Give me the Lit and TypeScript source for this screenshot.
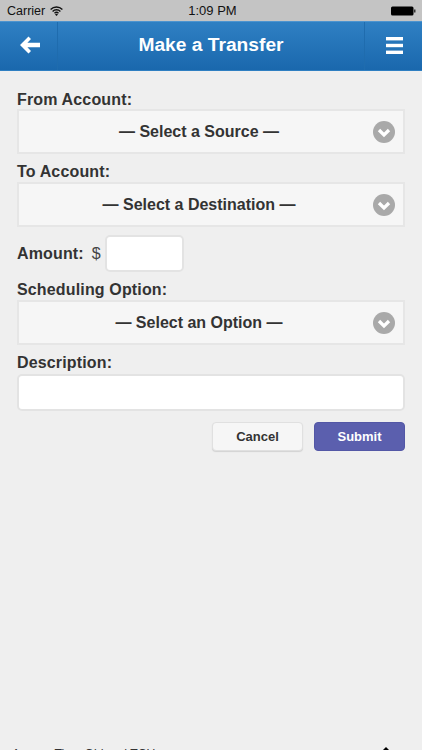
import { LitElement, html, css } from "lit";
import { customElement } from "lit/decorators.js";

@customElement("app-root")
export class AppRoot extends LitElement {
  static styles = css`
    :host {
      display: flex;
      flex-direction: column;
      height: 750px;
      overflow: hidden;
      background: #efefef;
      color: #333;
      font-family: "Liberation Sans", Arial, sans-serif;
    }
    .status {
      height: 21px;
      flex: none;
      background: #c4c4c4;
      color: #111;
      display: grid;
      grid-template-columns: 1fr auto 1fr;
      align-items: center;
      padding: 0 6px 0 7px;
      font-size: 12.5px;
    }
    .status .left { display: flex; align-items: center; gap: 5px; }
    .status .right { display: flex; justify-content: flex-end; }
    .status .time { font-size: 13px; padding-left: 2px; }
    .header {
      height: 50px;
      flex: none;
      box-sizing: border-box;
      display: flex;
      align-items: stretch;
      background: linear-gradient(#2f80c3, #1a68ad);
      border-top: 1px solid #4d94cf;
      border-bottom: 1px solid #2f7fc2;
      color: #fff;
    }
    .hbtn {
      width: 58px;
      flex: none;
      box-sizing: border-box;
      display: flex;
      align-items: center;
      justify-content: center;
    }
    .hbtn.back { border-right: 1px solid #1f6cae; padding: 0 0 3px 1px; }
    .hbtn.menu { border-left: 1px solid #1f6cae; padding: 0 0 1px 1px; }
    .title {
      flex: 1;
      text-align: center;
      font-size: 19.2px;
      font-weight: 700;
      line-height: 45px;
    }
    .form {
      flex: 1;
      padding: 19px 17px 0 17px;
      display: flex;
      flex-direction: column;
    }
    .lbl {
      font-size: 16px;
      letter-spacing: 0.15px;
      font-weight: 700;
      line-height: 19px;
      color: #333;
    }
    .select {
      margin-top: 1px;
      margin-bottom: 8px;
      height: 45px;
      flex: none;
      box-sizing: border-box;
      border: 2px solid #e6e6e6;
      background: #f6f6f6;
      display: flex;
      align-items: center;
      justify-content: center;
      padding: 1px 24px 0 0;
      position: relative;
      font-size: 16px;
      font-weight: 700;
      color: #333;
    }
    .select.first { margin-top: 0; }
    .chev {
      position: absolute;
      right: 8px;
      top: 10px;
      width: 22px;
      height: 22px;
    }
    .amount {
      margin-bottom: 8px;
      display: flex;
      align-items: center;
      height: 37px;
    }
    .dollar { font-size: 16px; color: #444; margin-left: 8px; width: 13px; }
    .input {
      box-sizing: border-box;
      background: #fff;
      border: 2px solid #e3e3e3;
      border-radius: 5px;
    }
    .amount .input { width: 79px; height: 37px; }
    .desc { margin-top: 2px; height: 37px; flex: none; }
    .actions {
      margin-top: 11px;
      display: flex;
      justify-content: flex-end;
      gap: 11px;
    }
    .btn {
      box-sizing: border-box;
      width: 91px;
      height: 29px;
      border-radius: 4px;
      display: flex;
      align-items: center;
      justify-content: center;
      font-size: 13px;
      font-weight: 700;
    }
    .cancel { background: #f6f6f6; border: 1px solid #e0e0e0; box-shadow: 0 1px 1px #d2d2d2; color: #333; }
    .submit { background: #5b5fae; border: 1px solid #5357a6; color: #fff; }
    .footer {
      flex: none;
      height: 3px;
      overflow: hidden;
      position: relative;
      font-size: 12.2px;
      line-height: 14px;
      color: #333;
      padding-left: 12px;
    }
    .footer svg { position: absolute; right: 30px; top: 0; width: 12px; height: 12px; }
  `;

  private chev() {
    return html`<svg class="chev" viewBox="0 0 22 22">
      <circle cx="11" cy="11" r="11" fill="#a9a9a9"></circle>
      <path d="M6 9 11 14l5-5" fill="none" stroke="#fff" stroke-width="3.3"></path>
    </svg>`;
  }

  render() {
    return html`
      <div class="status">
        <div class="left">
          <span>Carrier</span>
          <svg width="13" height="10" viewBox="0 0 13 10">
            <path d="M.6 3.4a8.5 8.5 0 0 1 11.8 0M2.6 5.4a5.6 5.6 0 0 1 7.8 0M4.5 7.2a2.9 2.9 0 0 1 4 0" fill="none" stroke="#111" stroke-width="1.4"></path>
            <path d="M6.5 10 5 8.4a2.2 2.2 0 0 1 3 0z" fill="#111"></path>
          </svg>
        </div>
        <div class="time">1:09 PM</div>
        <div class="right">
          <svg width="25" height="10" viewBox="0 0 25 10">
            <rect x="0" y="0.5" width="22.5" height="9" rx="1.5" fill="#000"></rect>
            <rect x="23" y="3.5" width="1.5" height="3" fill="#333"></rect>
          </svg>
        </div>
      </div>
      <div class="header">
        <div class="hbtn back">
          <svg width="21" height="18" viewBox="0 0 21 18">
            <path d="M9.5 0.5 12 3l-3.6 3.7H21v4.6H8.4L12 15l-2.5 2.5L1 9z" fill="#fff"></path>
          </svg>
        </div>
        <div class="title">Make a Transfer</div>
        <div class="hbtn menu">
          <svg width="17" height="17" viewBox="0 0 17 17">
            <rect y="0" width="17" height="3.4" fill="#fff"></rect>
            <rect y="6.8" width="17" height="3.4" fill="#fff"></rect>
            <rect y="13.6" width="17" height="3.4" fill="#fff"></rect>
          </svg>
        </div>
      </div>
      <div class="form">
        <div class="lbl">From Account:</div>
        <div class="select first">— Select a Source —${this.chev()}</div>
        <div class="lbl">To Account:</div>
        <div class="select">— Select a Destination —${this.chev()}</div>
        <div class="amount">
          <span class="lbl">Amount:</span>
          <span class="dollar">$</span>
          <div class="input"></div>
        </div>
        <div class="lbl">Scheduling Option:</div>
        <div class="select">— Select an Option —${this.chev()}</div>
        <div class="lbl">Description:</div>
        <div class="input desc"></div>
        <div class="actions">
          <div class="btn cancel">Cancel</div>
          <div class="btn submit">Submit</div>
        </div>
      </div>
      <div class="footer">
        Access Time Old and TCU
        <svg viewBox="0 0 12 12"><path d="M6 0 12 6 6 12 0 6z" fill="#000"></path></svg>
      </div>
    `;
  }
}
